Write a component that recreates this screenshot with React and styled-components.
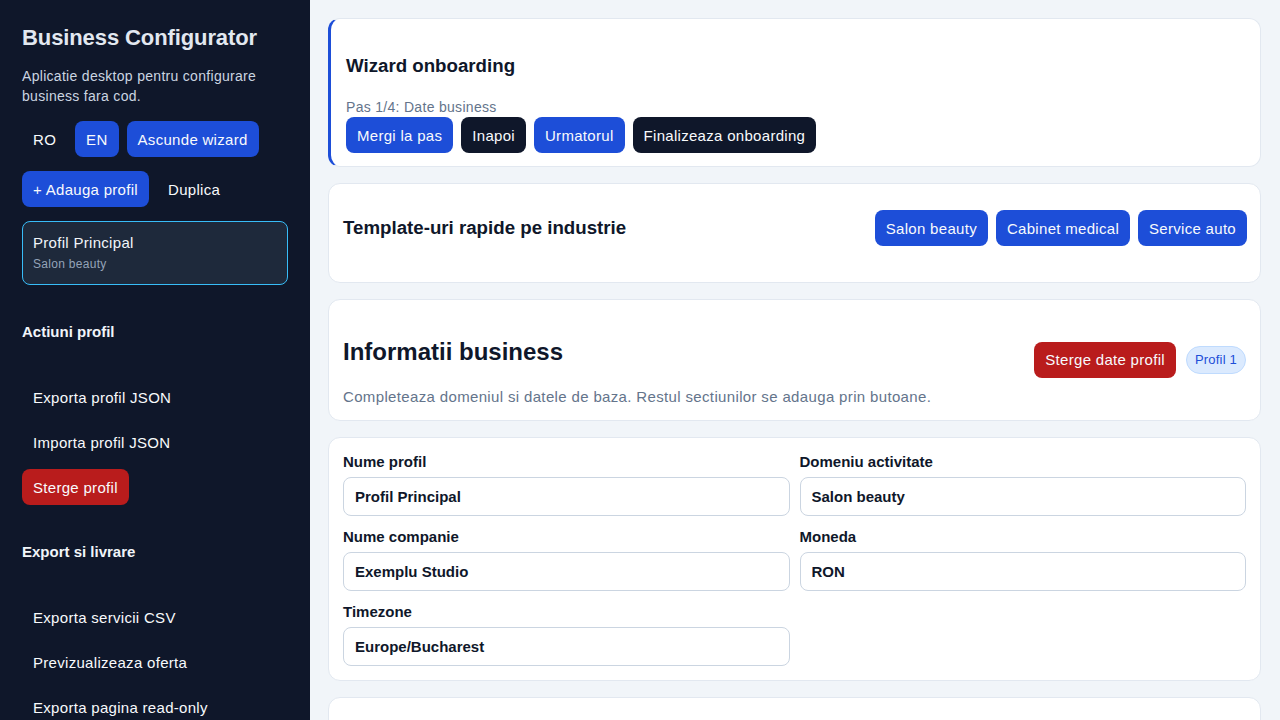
import React from 'react';
import styled, { createGlobalStyle } from 'styled-components';

const GlobalStyle = createGlobalStyle`
  * { box-sizing: border-box; }
  body {
    margin: 0;
    font-family: "Segoe UI", "Liberation Sans", Arial, sans-serif;
    background: #f1f5f9;
  }
`;

const profileFields = [
  { label: 'Nume profil', value: 'Profil Principal' },
  { label: 'Domeniu activitate', value: 'Salon beauty' },
  { label: 'Nume companie', value: 'Exemplu Studio' },
  { label: 'Moneda', value: 'RON' },
  { label: 'Timezone', value: 'Europe/Bucharest' },
];

function App() {
  return (
    <>
      <GlobalStyle />
      <Layout>
        <Sidebar>
          <Brand>Business Configurator</Brand>
          <Tagline>Aplicatie desktop pentru configurare business fara cod.</Tagline>
          <ButtonRow>
            <Button $variant="ghost">RO</Button>
            <Button>EN</Button>
            <Button>Ascunde wizard</Button>
          </ButtonRow>
          <ButtonRow>
            <Button>+ Adauga profil</Button>
            <Button $variant="ghost">Duplica</Button>
          </ButtonRow>
          <ProfileCard>
            <ProfileName>Profil Principal</ProfileName>
            <ProfileMeta>Salon beauty</ProfileMeta>
          </ProfileCard>

          <SideSection>
            <SideHeading>Actiuni profil</SideHeading>
            <Button $variant="ghost">Exporta profil JSON</Button>
            <Button $variant="ghost">Importa profil JSON</Button>
            <Button $variant="danger">Sterge profil</Button>
          </SideSection>

          <SideSection>
            <SideHeading>Export si livrare</SideHeading>
            <Button $variant="ghost">Exporta servicii CSV</Button>
            <Button $variant="ghost">Previzualizeaza oferta</Button>
            <Button $variant="ghost">Exporta pagina read-only</Button>
          </SideSection>
        </Sidebar>

        <Main>
          <WizardCard>
            <CardTitle>Wizard onboarding</CardTitle>
            <StepText>Pas 1/4: Date business</StepText>
            <ButtonRow>
              <Button>Mergi la pas</Button>
              <Button $variant="dark">Inapoi</Button>
              <Button>Urmatorul</Button>
              <Button $variant="dark">Finalizeaza onboarding</Button>
            </ButtonRow>
          </WizardCard>

          <TemplateCard>
            <CardTitle>Template-uri rapide pe industrie</CardTitle>
            <ButtonRow>
              <Button>Salon beauty</Button>
              <Button>Cabinet medical</Button>
              <Button>Service auto</Button>
            </ButtonRow>
          </TemplateCard>

          <InfoCard>
            <InfoHeader>
              <SectionTitle>Informatii business</SectionTitle>
              <HeaderActions>
                <Button $variant="danger">Sterge date profil</Button>
                <Badge>Profil 1</Badge>
              </HeaderActions>
            </InfoHeader>
            <Description>
              Completeaza domeniul si datele de baza. Restul sectiunilor se adauga prin butoane.
            </Description>
          </InfoCard>

          <FormCard>
            {profileFields.map(field => (
              <Field key={field.label}>
                <Label>{field.label}</Label>
                <Input defaultValue={field.value} />
              </Field>
            ))}
          </FormCard>

          <Card />
        </Main>
      </Layout>
    </>
  );
}

export default App;

const Layout = styled.div`
  display: grid;
  grid-template-columns: 310px 1fr;
  height: 100vh;
  overflow: hidden;
`;

const Sidebar = styled.aside`
  display: flex;
  flex-direction: column;
  gap: 14px;
  padding: 24px 22px;
  background: #0f172a;
  color: #e2e8f0;
  overflow: hidden;

  & > * {
    flex-shrink: 0;
  }
`;

const Brand = styled.h1`
  margin: 0;
  font-size: 22px;
  line-height: 28px;
  font-weight: 700;
  color: #e2e8f0;
  letter-spacing: -0.1px;
`;

const Tagline = styled.p`
  margin: 0 0 1px;
  font-size: 14px;
  line-height: 20px;
  color: #cbd5e1;
  letter-spacing: 0.3px;
`;

const ButtonRow = styled.div`
  display: flex;
  flex-wrap: wrap;
  align-items: center;
  gap: 8px;
`;

const Button = styled.button`
  flex-shrink: 0;
  height: 36px;
  padding: 0 11px;
  border: none;
  border-radius: 8px;
  font-family: inherit;
  font-size: 15px;
  letter-spacing: 0.3px;
  white-space: nowrap;
  cursor: pointer;
  align-self: flex-start;
  color: #f8fafc;
  background: ${props =>
    props.$variant === 'ghost'
      ? 'transparent'
      : props.$variant === 'danger'
      ? '#b91c1c'
      : props.$variant === 'dark'
      ? '#0f172a'
      : '#1d4ed8'};
`;

const ProfileCard = styled.div`
  display: flex;
  flex-direction: column;
  gap: 3px;
  height: 64px;
  padding: 11px 10px;
  border: 1px solid #38bdf8;
  border-radius: 8px;
  background: #1e293b;
`;

const ProfileName = styled.span`
  font-size: 15px;
  line-height: 20px;
  color: #f1f5f9;
  letter-spacing: 0.3px;
`;

const ProfileMeta = styled.span`
  font-size: 12px;
  line-height: 16px;
  color: #94a3b8;
  letter-spacing: 0.3px;
`;

const SideSection = styled.section`
  display: flex;
  flex-direction: column;
  gap: 9px;
  margin-top: 23px;
`;

const SideHeading = styled.h2`
  margin: 0 0 28px;
  font-size: 15px;
  line-height: 20px;
  font-weight: 700;
  color: #f1f5f9;
`;

const Main = styled.main`
  display: flex;
  flex-direction: column;
  gap: 16px;
  padding: 18px 19px 18px 18px;
  overflow: hidden;
`;

const Card = styled.section`
  flex-shrink: 0;
  background: #ffffff;
  border: 1px solid #e2e8f0;
  border-radius: 12px;
  min-height: 60px;
`;

const WizardCard = styled(Card)`
  padding: 16px 15px 13px;
  border-left: 3px solid #1d4ed8;
`;

const CardTitle = styled.h3`
  margin: 19px 0;
  font-size: 18.7px;
  line-height: 24px;
  font-weight: 700;
  color: #0f172a;
`;

const StepText = styled.p`
  margin: 0;
  font-size: 14px;
  line-height: 20px;
  color: #64748b;
  letter-spacing: 0.3px;
`;

const TemplateCard = styled(Card)`
  display: flex;
  align-items: center;
  justify-content: space-between;
  padding: 13px 13px 23px 14px;
`;

const InfoCard = styled(Card)`
  padding: 16px 14px 13px;
`;

const InfoHeader = styled.div`
  display: flex;
  align-items: center;
  justify-content: space-between;
`;

const SectionTitle = styled.h2`
  margin: 20px 0 19px;
  font-size: 24px;
  line-height: 32px;
  font-weight: 700;
  color: #0f172a;
`;

const HeaderActions = styled.div`
  display: flex;
  align-items: center;
  gap: 10px;
  padding-top: 16px;
`;

const Badge = styled.span`
  display: inline-flex;
  align-items: center;
  height: 28px;
  padding: 0 8px;
  border: 1px solid #bfdbfe;
  border-radius: 999px;
  background: #dbeafe;
  color: #1d4ed8;
  font-size: 13px;
  letter-spacing: 0.2px;
`;

const Description = styled.p`
  margin: 0;
  font-size: 15px;
  line-height: 20px;
  color: #64748b;
  letter-spacing: 0.35px;
`;

const FormCard = styled(Card)`
  display: grid;
  grid-template-columns: 1fr 1fr;
  column-gap: 10px;
  row-gap: 11px;
  padding: 14px 14px 14px;
`;

const Field = styled.label`
  display: flex;
  flex-direction: column;
  gap: 5px;
`;

const Label = styled.span`
  font-size: 15px;
  line-height: 20px;
  font-weight: 600;
  color: #0f172a;
`;

const Input = styled.input`
  height: 39px;
  padding: 0 11px;
  border: 1px solid #cbd5e1;
  border-radius: 8px;
  background: #ffffff;
  font-family: inherit;
  font-size: 15px;
  font-weight: 600;
  color: #0f172a;
  outline: none;
`;
